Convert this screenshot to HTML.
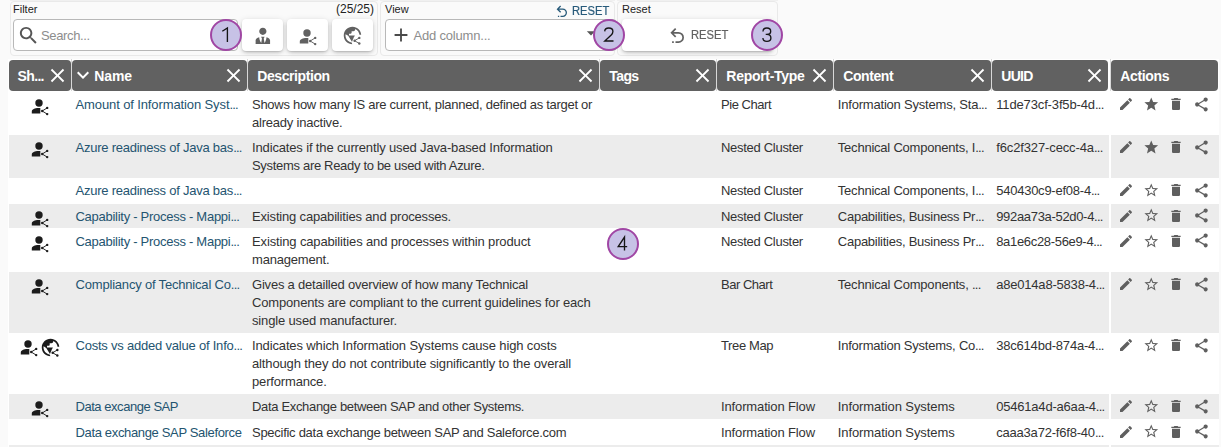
<!DOCTYPE html>
<html><head><meta charset="utf-8"><style>
*{box-sizing:border-box}
html,body{margin:0;padding:0;width:1221px;height:447px;overflow:hidden;background:#fafafa;font-family:"Liberation Sans", sans-serif;}
.a{position:absolute}
.t{position:absolute;white-space:nowrap;line-height:18px}
.el{letter-spacing:-0.75px}
.panel{position:absolute;top:1px;height:54.5px;border:1px solid #e9e9e9;border-radius:4px;background:#fafafa}
.ptop{position:absolute;top:0;height:1px;background:#f0f0f0}
.lbl{position:absolute;font-size:11px;color:#222;line-height:13px;top:3px}
.input{position:absolute;top:19px;height:31.5px;border:1px solid #b8b8b8;border-radius:4px;background:#fff}
.btn{position:absolute;top:19px;height:31.6px;border-radius:4px;background:#fff;box-shadow:0 2px 4px -1px rgba(0,0,0,.2),0 1px 6px 0 rgba(0,0,0,.12),0 1px 1px 0 rgba(0,0,0,.08)}
.badge{position:absolute;width:32px;height:32px;border-radius:50%;background:#c7c2e6;border:2px solid #a046a4;font-size:20px;line-height:28px;text-align:center;color:#111;z-index:5}
.hd{position:absolute;top:60px;height:30.5px;background:#616161;border-radius:4px}
.ht{position:absolute;line-height:30px;font-size:14px;font-weight:bold;color:#fff;white-space:nowrap}
.sep{position:absolute;top:58.5px;height:33px;width:1px;background:#d8d8d8}
.row{position:absolute;left:9px;width:1210px}
.g{background:#ececec}
.w{background:#fff}
.cell{font-size:13px;color:#333;letter-spacing:-0.2px}
.lnk{font-size:13px;color:#245470;letter-spacing:-0.15px}
</style></head><body>

<div class="ptop" style="left:10px;width:368px"></div>
<div class="ptop" style="left:380px;width:235px"></div>
<div class="ptop" style="left:617px;width:161px"></div>
<div class="panel" style="left:10px;width:368px"></div>
<div class="panel" style="left:380px;width:235px"></div>
<div class="panel" style="left:617px;width:161px"></div>
<div class="lbl" style="left:13px">Filter</div>
<div class="a" style="left:336px;top:2px;font-size:12px;line-height:15px;color:#222">(25/25)</div>
<div class="input" style="left:13px;width:225px"></div>
<svg style="position:absolute;left:17px;top:23.5px;width:23px;height:23px" viewBox="0 0 24 24"><path fill="#555" d="M15.5 14h-.79l-.28-.27C15.41 12.59 16 11.11 16 9.5 16 5.91 13.09 3 9.5 3S3 5.91 3 9.5 5.91 16 9.5 16c1.61 0 3.09-.59 4.23-1.57l.27.28v.79l5 4.99L20.49 19l-4.99-5zm-6 0C7.01 14 5 11.99 5 9.5S7.01 5 9.5 5 14 7.01 14 9.5 11.99 14 9.5 14z"/></svg>
<div class="a" style="left:41px;top:27.5px;font-size:13px;line-height:16px;color:#8d8d8d;letter-spacing:-0.35px">Search...</div>
<div class="btn" style="left:242px;width:41px"></div>
<svg style="position:absolute;left:251.6px;top:25.2px;width:21.7px;height:21.7px" viewBox="0 0 24 24"><path fill="#616161" d="M12 3C14.21 3 16 4.79 16 7S14.21 11 12 11 8 9.21 8 7 9.79 3 12 3M16 13.54C16 14.6 15.72 17.07 13.81 19.83L13 15L13.94 13.12C13.32 13.05 12.67 13 12 13S10.68 13.05 10.06 13.12L11 15L10.19 19.83C8.28 17.07 8 14.6 8 13.54C5.61 14.24 4 15.5 4 17V21H20V17C20 15.5 18.4 14.24 16 13.54Z"/></svg>
<div class="btn" style="left:287px;width:41px"></div>
<svg style="position:absolute;left:298.6px;top:27.799999999999997px;width:19px;height:18px;overflow:visible" viewBox="0 0 19 18"><circle cx="8" cy="5" r="3.7" fill="#616161"/><path fill="#616161" d="M0.80 15.60 L0.80 13.40 C0.80 11.40 3.80 10.10 7.50 10.10 L9.30 10.10 L9.30 15.60 Z"/><path stroke="#616161" stroke-width="0.95" fill="none" d="M16.20 9.90 L11.20 13.00 L16.20 16.10"/><circle cx="16.2" cy="9.9" r="1.2" fill="#616161"/><circle cx="11.2" cy="13.0" r="1.2" fill="#616161"/><circle cx="16.2" cy="16.1" r="1.2" fill="#616161"/></svg>
<div class="btn" style="left:332px;width:41px"></div>
<svg style="position:absolute;left:341.90px;top:25.00px;width:21.00px;height:21.00px;overflow:visible" viewBox="0 0 24 24"><defs><mask id="gm1" maskUnits="userSpaceOnUse" x="-2" y="-2" width="28" height="28"><rect x="-2" y="-2" width="28" height="28" fill="#fff"/><path d="M12.2 25 L11.2 19.6 L13.9 13.0 L17.6 11.0 L25 11.0 L25 25 Z" fill="#000"/></mask></defs><path fill="#616161" mask="url(#gm1)" d="M12 2C6.48 2 2 6.48 2 12s4.48 10 10 10 10-4.48 10-10S17.52 2 12 2zM11.3 19.95C7.4 19.5 4 16.1 4 12C4 11.5 4.04 11.05 4.1 10.6L7.1 12.4L11.5 19.5zM17.9 17.39c-.26-.81-1-1.39-1.9-1.39h-1v-3c0-.55-.45-1-1-1H8v-2h2c.55 0 1-.45 1-1V7h2c1.1 0 2-.9 2-2v-.41c2.93 1.19 5 4.06 5 7.41 0 2.08-.8 3.97-2.1 5.39z"/><path stroke="#616161" stroke-width="1.09" fill="none" d="M19.77 14.74 L14.40 17.94 L19.77 21.14"/><circle cx="19.77" cy="14.74" r="1.37" fill="#616161"/><circle cx="14.40" cy="17.94" r="1.37" fill="#616161"/><circle cx="19.77" cy="21.14" r="1.37" fill="#616161"/></svg>
<div class="badge" style="left:210px;top:18.799999999999997px"><svg style="position:absolute;left:-2px;top:-2px;overflow:visible" width="32" height="32" viewBox="-16 -16 32 32"><path d="M-3.7 -3.8 L1.4 -7.1 V6.9" transform="translate(0 0)" fill="none" stroke="#151515" stroke-width="1.35"/></svg></div>
<div class="lbl" style="left:385px">View</div>
<svg style="position:absolute;left:553.8px;top:4.0px;width:15.6px;height:15.6px" viewBox="0 0 24 24"><path fill="#275a7a" d="M13.5,7A6.5,6.5 0 0,1 20,13.5A6.5,6.5 0 0,1 13.5,20H10V18H13.5C16,18 18,16 18,13.5C18,11 16,9 13.5,9H7.83L10.91,12.09L9.5,13.5L4,8L9.5,2.5L10.92,3.91L7.83,7H13.5M6,18H8V20H6V18Z"/></svg>
<div class="a" style="left:572px;top:3px;font-size:13px;line-height:16px;color:#275a7a;transform:scaleX(0.86);transform-origin:0 0;-webkit-text-stroke:0.2px #275a7a">RESET</div>
<div class="input" style="left:385px;width:232px"></div>
<svg style="position:absolute;left:389.6px;top:23.5px;width:22px;height:22px" viewBox="0 0 24 24"><path fill="#4a4a4a" d="M19 13h-6v6h-2v-6H5v-2h6V5h2v6h6v2z"/></svg>
<div class="a" style="left:413.6px;top:27.5px;font-size:13px;line-height:16px;color:#8d8d8d;letter-spacing:-0.2px">Add column...</div>
<svg style="position:absolute;left:581px;top:23px;width:20px;height:20px" viewBox="0 0 24 24"><path fill="#555" d="M7 10l5 5 5-5z"/></svg>
<div class="badge" style="left:593px;top:18.5px"><svg style="position:absolute;left:-2px;top:-2px;overflow:visible" width="32" height="32" viewBox="-16 -16 32 32"><path d="M-4.3 -3.6 C-4.2 -5.9 -2.5 -7.0 -0.2 -7.0 C2.2 -7.0 3.9 -5.6 3.9 -3.5 C3.9 -2.1 3.2 -1.0 2.2 0.1 L-4.2 6.0 L4.5 6.0" transform="translate(0 0)" fill="none" stroke="#151515" stroke-width="1.35"/></svg></div>
<div class="lbl" style="left:622px">Reset</div>
<div class="btn" style="left:622px;width:151px"></div>
<svg style="position:absolute;left:666.6px;top:25.8px;width:20.4px;height:20.4px" viewBox="0 0 24 24"><path fill="#616161" d="M13.5,7A6.5,6.5 0 0,1 20,13.5A6.5,6.5 0 0,1 13.5,20H10V18H13.5C16,18 18,16 18,13.5C18,11 16,9 13.5,9H7.83L10.91,12.09L9.5,13.5L4,8L9.5,2.5L10.92,3.91L7.83,7H13.5M6,18H8V20H6V18Z"/></svg>
<div class="a" style="left:690.5px;top:27px;font-size:13px;line-height:16px;color:#616161;transform:scaleX(0.86);transform-origin:0 0;-webkit-text-stroke:0.2px #616161">RESET</div>
<div class="badge" style="left:750.7px;top:18.5px"><svg style="position:absolute;left:-2px;top:-2px;overflow:visible" width="32" height="32" viewBox="-16 -16 32 32"><path d="M-4.0 -3.6 C-4.0 -5.7 -2.3 -7.0 -0.1 -7.0 C2.2 -7.0 3.7 -5.8 3.7 -3.8 C3.7 -1.8 2.1 -0.6 -0.1 -0.6 L-1.3 -0.6 M-0.1 -0.6 C2.4 -0.6 3.9 0.8 3.9 3.0 C3.9 5.1 2.2 6.3 -0.1 6.3 C-2.5 6.3 -4.1 5.1 -4.1 3.0" transform="translate(0 0)" fill="none" stroke="#151515" stroke-width="1.35"/></svg></div>
<div class="a" style="left:8px;top:59px;width:1211px;height:388px;background:#fff"></div>
<div class="hd" style="left:9px;width:62px"></div>
<div class="ht" style="left:17.4px;top:60.5px;letter-spacing:-0.5px">Sh<span class="el">...</span></div>
<svg style="position:absolute;left:45.6px;top:64.0px;width:23px;height:23px" viewBox="0 0 24 24"><path fill="#fff" d="M19 6.41L17.59 5 12 10.59 6.41 5 5 6.41 10.59 12 5 17.59 6.41 19 12 13.41 17.59 19 19 17.59 13.41 12z"/></svg>
<div class="hd" style="left:72px;width:175px"></div>
<svg style="position:absolute;left:70.5px;top:63.2px;width:24px;height:24px" viewBox="0 0 24 24"><path fill="#fff" d="M16.59 8.59L12 13.17 7.41 8.59 6 10l6 6 6-6z"/></svg>
<div class="ht" style="left:94.3px;top:60.5px;letter-spacing:-0.1px">Name</div>
<svg style="position:absolute;left:221.6px;top:64.0px;width:23px;height:23px" viewBox="0 0 24 24"><path fill="#fff" d="M19 6.41L17.59 5 12 10.59 6.41 5 5 6.41 10.59 12 5 17.59 6.41 19 12 13.41 17.59 19 19 17.59 13.41 12z"/></svg>
<div class="hd" style="left:248px;width:351px"></div>
<div class="ht" style="left:257.3px;top:60.5px;letter-spacing:-0.42px">Description</div>
<svg style="position:absolute;left:573.6px;top:64.0px;width:23px;height:23px" viewBox="0 0 24 24"><path fill="#fff" d="M19 6.41L17.59 5 12 10.59 6.41 5 5 6.41 10.59 12 5 17.59 6.41 19 12 13.41 17.59 19 19 17.59 13.41 12z"/></svg>
<div class="hd" style="left:600px;width:116px"></div>
<div class="ht" style="left:609.3px;top:60.5px;letter-spacing:-0.6px">Tags</div>
<svg style="position:absolute;left:690.6px;top:64.0px;width:23px;height:23px" viewBox="0 0 24 24"><path fill="#fff" d="M19 6.41L17.59 5 12 10.59 6.41 5 5 6.41 10.59 12 5 17.59 6.41 19 12 13.41 17.59 19 19 17.59 13.41 12z"/></svg>
<div class="hd" style="left:717px;width:116px"></div>
<div class="ht" style="left:726.3px;top:60.5px;letter-spacing:-0.28px">Report-Type</div>
<svg style="position:absolute;left:807.6px;top:64.0px;width:23px;height:23px" viewBox="0 0 24 24"><path fill="#fff" d="M19 6.41L17.59 5 12 10.59 6.41 5 5 6.41 10.59 12 5 17.59 6.41 19 12 13.41 17.59 19 19 17.59 13.41 12z"/></svg>
<div class="hd" style="left:834px;width:157px"></div>
<div class="ht" style="left:843.3px;top:60.5px;letter-spacing:-0.42px">Content</div>
<svg style="position:absolute;left:965.6px;top:64.0px;width:23px;height:23px" viewBox="0 0 24 24"><path fill="#fff" d="M19 6.41L17.59 5 12 10.59 6.41 5 5 6.41 10.59 12 5 17.59 6.41 19 12 13.41 17.59 19 19 17.59 13.41 12z"/></svg>
<div class="hd" style="left:992px;width:116px"></div>
<div class="ht" style="left:1001.3px;top:60.5px;letter-spacing:-0.7px">UUID</div>
<svg style="position:absolute;left:1082.6px;top:64.0px;width:23px;height:23px" viewBox="0 0 24 24"><path fill="#fff" d="M19 6.41L17.59 5 12 10.59 6.41 5 5 6.41 10.59 12 5 17.59 6.41 19 12 13.41 17.59 19 19 17.59 13.41 12z"/></svg>
<div class="hd" style="left:1111px;width:107px"></div>
<div class="ht" style="left:1120.3px;top:60.5px;letter-spacing:-0.35px">Actions</div>
<div class="sep" style="left:71px"></div>
<div class="sep" style="left:247px"></div>
<div class="sep" style="left:599px"></div>
<div class="sep" style="left:716px"></div>
<div class="sep" style="left:833px"></div>
<div class="sep" style="left:991px"></div>
<div class="sep" style="left:1110px"></div>
<div class="row w" style="top:91.00px;height:43.60px"></div>
<svg style="position:absolute;left:31.0px;top:98.0px;width:19px;height:18px;overflow:visible" viewBox="0 0 19 18"><circle cx="8" cy="5" r="3.7" fill="#1c1c1c"/><path fill="#1c1c1c" d="M0.80 15.60 L0.80 13.40 C0.80 11.40 3.80 10.10 7.50 10.10 L9.30 10.10 L9.30 15.60 Z"/><path stroke="#1c1c1c" stroke-width="0.95" fill="none" d="M16.20 9.90 L11.20 13.00 L16.20 16.10"/><circle cx="16.2" cy="9.9" r="1.2" fill="#1c1c1c"/><circle cx="11.2" cy="13.0" r="1.2" fill="#1c1c1c"/><circle cx="16.2" cy="16.1" r="1.2" fill="#1c1c1c"/></svg>
<div class="t lnk" style="left:75.5px;top:96.00px;letter-spacing:-0.112px;">Amount of Information Syst<span class="el">...</span></div>
<div class="t cell" style="left:252px;top:96.00px;letter-spacing:-0.282px;">Shows how many IS are current, planned, defined as target or</div>
<div class="t cell" style="left:252px;top:114.00px;letter-spacing:-0.213px;">already inactive.</div>
<div class="t cell" style="left:721px;top:96.00px;letter-spacing:-0.450px;">Pie Chart</div>
<div class="t cell" style="left:837.8px;top:96.00px;letter-spacing:-0.200px;">Information Systems, Sta<span class="el">...</span></div>
<div class="t cell" style="left:996.2px;top:96.00px;letter-spacing:-0.138px;">11de73cf-3f5b-4d<span class="el">...</span></div>
<svg style="position:absolute;left:1117.7px;top:96.0px;width:16px;height:16px" viewBox="0 0 24 24"><path fill="#5f5f5f" d="M3 17.25V21h3.75L17.81 9.94l-3.75-3.75L3 17.25zM20.71 7.04c.39-.39.39-1.02 0-1.41l-2.34-2.34c-.39-.39-1.02-.39-1.41 0l-1.83 1.83 3.75 3.75 1.83-1.83z"/></svg>
<svg style="position:absolute;left:1142.65px;top:95.75px;width:16.5px;height:16.5px" viewBox="0 0 24 24"><path fill="#5f5f5f" d="M12 17.27L18.18 21l-1.64-7.03L22 9.24l-7.19-.61L12 2 9.19 8.63 2 9.24l5.46 4.73L5.82 21z"/></svg>
<svg style="position:absolute;left:1167.9px;top:96.0px;width:16px;height:16px" viewBox="0 0 24 24"><path fill="#5f5f5f" d="M6 19c0 1.1.9 2 2 2h8c1.1 0 2-.9 2-2V7H6v12zM19 4h-3.5l-1-1h-5l-1 1H5v2h14V4z"/></svg>
<svg style="position:absolute;left:1192.9px;top:95.55px;width:16.9px;height:16.9px" viewBox="0 0 24 24"><path fill="#5f5f5f" d="M18 16.08c-.76 0-1.44.3-1.96.77L8.91 12.7c.05-.23.09-.46.09-.7s-.04-.47-.09-.7l7.05-4.11c.54.5 1.25.81 2.04.81 1.66 0 3-1.34 3-3s-1.34-3-3-3-3 1.34-3 3c0 .24.04.47.09.7L8.04 9.81C7.5 9.31 6.79 9 6 9c-1.66 0-3 1.34-3 3s1.34 3 3 3c.79 0 1.5-.31 2.04-.81l7.12 4.16c-.05.21-.08.43-.08.65 0 1.61 1.31 2.92 2.92 2.92 1.61 0 2.92-1.31 2.92-2.92s-1.31-2.92-2.92-2.92z"/></svg>
<div class="row g" style="top:134.60px;height:43.00px"></div>
<svg style="position:absolute;left:31.0px;top:141.20000000000002px;width:19px;height:18px;overflow:visible" viewBox="0 0 19 18"><circle cx="8" cy="5" r="3.7" fill="#1c1c1c"/><path fill="#1c1c1c" d="M0.80 15.60 L0.80 13.40 C0.80 11.40 3.80 10.10 7.50 10.10 L9.30 10.10 L9.30 15.60 Z"/><path stroke="#1c1c1c" stroke-width="0.95" fill="none" d="M16.20 9.90 L11.20 13.00 L16.20 16.10"/><circle cx="16.2" cy="9.9" r="1.2" fill="#1c1c1c"/><circle cx="11.2" cy="13.0" r="1.2" fill="#1c1c1c"/><circle cx="16.2" cy="16.1" r="1.2" fill="#1c1c1c"/></svg>
<div class="t lnk" style="left:75.5px;top:139.20px;letter-spacing:-0.238px;">Azure readiness of Java bas<span class="el">...</span></div>
<div class="t cell" style="left:252px;top:139.20px;letter-spacing:-0.146px;">Indicates if the currently used Java-based Information</div>
<div class="t cell" style="left:252px;top:157.20px;letter-spacing:-0.312px;">Systems are Ready to be used with Azure.</div>
<div class="t cell" style="left:721px;top:139.20px;letter-spacing:-0.292px;">Nested Cluster</div>
<div class="t cell" style="left:837.8px;top:139.20px;letter-spacing:-0.217px;">Technical Components, I<span class="el">...</span></div>
<div class="t cell" style="left:996.2px;top:139.20px;letter-spacing:-0.125px;">f6c2f327-cecc-4a<span class="el">...</span></div>
<svg style="position:absolute;left:1117.7px;top:139.20000000000002px;width:16px;height:16px" viewBox="0 0 24 24"><path fill="#5f5f5f" d="M3 17.25V21h3.75L17.81 9.94l-3.75-3.75L3 17.25zM20.71 7.04c.39-.39.39-1.02 0-1.41l-2.34-2.34c-.39-.39-1.02-.39-1.41 0l-1.83 1.83 3.75 3.75 1.83-1.83z"/></svg>
<svg style="position:absolute;left:1142.65px;top:138.95000000000002px;width:16.5px;height:16.5px" viewBox="0 0 24 24"><path fill="#5f5f5f" d="M12 17.27L18.18 21l-1.64-7.03L22 9.24l-7.19-.61L12 2 9.19 8.63 2 9.24l5.46 4.73L5.82 21z"/></svg>
<svg style="position:absolute;left:1167.9px;top:139.20000000000002px;width:16px;height:16px" viewBox="0 0 24 24"><path fill="#5f5f5f" d="M6 19c0 1.1.9 2 2 2h8c1.1 0 2-.9 2-2V7H6v12zM19 4h-3.5l-1-1h-5l-1 1H5v2h14V4z"/></svg>
<svg style="position:absolute;left:1192.9px;top:138.75000000000003px;width:16.9px;height:16.9px" viewBox="0 0 24 24"><path fill="#5f5f5f" d="M18 16.08c-.76 0-1.44.3-1.96.77L8.91 12.7c.05-.23.09-.46.09-.7s-.04-.47-.09-.7l7.05-4.11c.54.5 1.25.81 2.04.81 1.66 0 3-1.34 3-3s-1.34-3-3-3-3 1.34-3 3c0 .24.04.47.09.7L8.04 9.81C7.5 9.31 6.79 9 6 9c-1.66 0-3 1.34-3 3s1.34 3 3 3c.79 0 1.5-.31 2.04-.81l7.12 4.16c-.05.21-.08.43-.08.65 0 1.61 1.31 2.92 2.92 2.92 1.61 0 2.92-1.31 2.92-2.92s-1.31-2.92-2.92-2.92z"/></svg>
<div class="row w" style="top:177.60px;height:26.00px"></div>
<div class="t lnk" style="left:75.5px;top:182.40px;letter-spacing:-0.238px;">Azure readiness of Java bas<span class="el">...</span></div>
<div class="t cell" style="left:721px;top:182.40px;letter-spacing:-0.292px;">Nested Cluster</div>
<div class="t cell" style="left:837.8px;top:182.40px;letter-spacing:-0.217px;">Technical Components, I<span class="el">...</span></div>
<div class="t cell" style="left:996.2px;top:182.40px;letter-spacing:-0.241px;">540430c9-ef08-4<span class="el">...</span></div>
<svg style="position:absolute;left:1117.7px;top:182.4px;width:16px;height:16px" viewBox="0 0 24 24"><path fill="#5f5f5f" d="M3 17.25V21h3.75L17.81 9.94l-3.75-3.75L3 17.25zM20.71 7.04c.39-.39.39-1.02 0-1.41l-2.34-2.34c-.39-.39-1.02-.39-1.41 0l-1.83 1.83 3.75 3.75 1.83-1.83z"/></svg>
<svg style="position:absolute;left:1142.65px;top:182.15px;width:16.5px;height:16.5px" viewBox="0 0 24 24"><path fill="#5f5f5f" d="M22 9.24l-7.19-.62L12 2 9.19 8.63 2 9.24l5.46 4.73L5.82 21 12 17.27 18.18 21l-1.63-7.03L22 9.24zM12 15.4l-3.76 2.27 1-4.28-3.32-2.88 4.38-.38L12 6.1l1.71 4.04 4.38.38-3.32 2.88 1 4.28L12 15.4z"/></svg>
<svg style="position:absolute;left:1167.9px;top:182.4px;width:16px;height:16px" viewBox="0 0 24 24"><path fill="#5f5f5f" d="M6 19c0 1.1.9 2 2 2h8c1.1 0 2-.9 2-2V7H6v12zM19 4h-3.5l-1-1h-5l-1 1H5v2h14V4z"/></svg>
<svg style="position:absolute;left:1192.9px;top:181.95000000000002px;width:16.9px;height:16.9px" viewBox="0 0 24 24"><path fill="#5f5f5f" d="M18 16.08c-.76 0-1.44.3-1.96.77L8.91 12.7c.05-.23.09-.46.09-.7s-.04-.47-.09-.7l7.05-4.11c.54.5 1.25.81 2.04.81 1.66 0 3-1.34 3-3s-1.34-3-3-3-3 1.34-3 3c0 .24.04.47.09.7L8.04 9.81C7.5 9.31 6.79 9 6 9c-1.66 0-3 1.34-3 3s1.34 3 3 3c.79 0 1.5-.31 2.04-.81l7.12 4.16c-.05.21-.08.43-.08.65 0 1.61 1.31 2.92 2.92 2.92 1.61 0 2.92-1.31 2.92-2.92s-1.31-2.92-2.92-2.92z"/></svg>
<div class="row g" style="top:203.60px;height:24.40px"></div>
<svg style="position:absolute;left:31.0px;top:209.6px;width:19px;height:18px;overflow:visible" viewBox="0 0 19 18"><circle cx="8" cy="5" r="3.7" fill="#1c1c1c"/><path fill="#1c1c1c" d="M0.80 15.60 L0.80 13.40 C0.80 11.40 3.80 10.10 7.50 10.10 L9.30 10.10 L9.30 15.60 Z"/><path stroke="#1c1c1c" stroke-width="0.95" fill="none" d="M16.20 9.90 L11.20 13.00 L16.20 16.10"/><circle cx="16.2" cy="9.9" r="1.2" fill="#1c1c1c"/><circle cx="11.2" cy="13.0" r="1.2" fill="#1c1c1c"/><circle cx="16.2" cy="16.1" r="1.2" fill="#1c1c1c"/></svg>
<div class="t lnk" style="left:75.5px;top:207.60px;letter-spacing:-0.273px;">Capability - Process - Mappi<span class="el">...</span></div>
<div class="t cell" style="left:252px;top:207.60px;letter-spacing:-0.171px;">Existing capabilities and processes.</div>
<div class="t cell" style="left:721px;top:207.60px;letter-spacing:-0.292px;">Nested Cluster</div>
<div class="t cell" style="left:837.8px;top:207.60px;letter-spacing:-0.256px;">Capabilities, Business Pr<span class="el">...</span></div>
<div class="t cell" style="left:996.2px;top:207.60px;letter-spacing:-0.320px;">992aa73a-52d0-4<span class="el">...</span></div>
<svg style="position:absolute;left:1117.7px;top:207.6px;width:16px;height:16px" viewBox="0 0 24 24"><path fill="#5f5f5f" d="M3 17.25V21h3.75L17.81 9.94l-3.75-3.75L3 17.25zM20.71 7.04c.39-.39.39-1.02 0-1.41l-2.34-2.34c-.39-.39-1.02-.39-1.41 0l-1.83 1.83 3.75 3.75 1.83-1.83z"/></svg>
<svg style="position:absolute;left:1142.65px;top:207.35px;width:16.5px;height:16.5px" viewBox="0 0 24 24"><path fill="#5f5f5f" d="M22 9.24l-7.19-.62L12 2 9.19 8.63 2 9.24l5.46 4.73L5.82 21 12 17.27 18.18 21l-1.63-7.03L22 9.24zM12 15.4l-3.76 2.27 1-4.28-3.32-2.88 4.38-.38L12 6.1l1.71 4.04 4.38.38-3.32 2.88 1 4.28L12 15.4z"/></svg>
<svg style="position:absolute;left:1167.9px;top:207.6px;width:16px;height:16px" viewBox="0 0 24 24"><path fill="#5f5f5f" d="M6 19c0 1.1.9 2 2 2h8c1.1 0 2-.9 2-2V7H6v12zM19 4h-3.5l-1-1h-5l-1 1H5v2h14V4z"/></svg>
<svg style="position:absolute;left:1192.9px;top:207.15px;width:16.9px;height:16.9px" viewBox="0 0 24 24"><path fill="#5f5f5f" d="M18 16.08c-.76 0-1.44.3-1.96.77L8.91 12.7c.05-.23.09-.46.09-.7s-.04-.47-.09-.7l7.05-4.11c.54.5 1.25.81 2.04.81 1.66 0 3-1.34 3-3s-1.34-3-3-3-3 1.34-3 3c0 .24.04.47.09.7L8.04 9.81C7.5 9.31 6.79 9 6 9c-1.66 0-3 1.34-3 3s1.34 3 3 3c.79 0 1.5-.31 2.04-.81l7.12 4.16c-.05.21-.08.43-.08.65 0 1.61 1.31 2.92 2.92 2.92 1.61 0 2.92-1.31 2.92-2.92s-1.31-2.92-2.92-2.92z"/></svg>
<div class="row w" style="top:228.00px;height:44.20px"></div>
<svg style="position:absolute;left:31.0px;top:234.79999999999998px;width:19px;height:18px;overflow:visible" viewBox="0 0 19 18"><circle cx="8" cy="5" r="3.7" fill="#1c1c1c"/><path fill="#1c1c1c" d="M0.80 15.60 L0.80 13.40 C0.80 11.40 3.80 10.10 7.50 10.10 L9.30 10.10 L9.30 15.60 Z"/><path stroke="#1c1c1c" stroke-width="0.95" fill="none" d="M16.20 9.90 L11.20 13.00 L16.20 16.10"/><circle cx="16.2" cy="9.9" r="1.2" fill="#1c1c1c"/><circle cx="11.2" cy="13.0" r="1.2" fill="#1c1c1c"/><circle cx="16.2" cy="16.1" r="1.2" fill="#1c1c1c"/></svg>
<div class="t lnk" style="left:75.5px;top:232.80px;letter-spacing:-0.273px;">Capability - Process - Mappi<span class="el">...</span></div>
<div class="t cell" style="left:252px;top:232.80px;letter-spacing:-0.139px;">Existing capabilities and processes within product</div>
<div class="t cell" style="left:252px;top:250.80px;letter-spacing:-0.200px;">management.</div>
<div class="t cell" style="left:721px;top:232.80px;letter-spacing:-0.292px;">Nested Cluster</div>
<div class="t cell" style="left:837.8px;top:232.80px;letter-spacing:-0.256px;">Capabilities, Business Pr<span class="el">...</span></div>
<div class="t cell" style="left:996.2px;top:232.80px;letter-spacing:-0.321px;">8a1e6c28-56e9-4<span class="el">...</span></div>
<svg style="position:absolute;left:1117.7px;top:232.79999999999998px;width:16px;height:16px" viewBox="0 0 24 24"><path fill="#5f5f5f" d="M3 17.25V21h3.75L17.81 9.94l-3.75-3.75L3 17.25zM20.71 7.04c.39-.39.39-1.02 0-1.41l-2.34-2.34c-.39-.39-1.02-.39-1.41 0l-1.83 1.83 3.75 3.75 1.83-1.83z"/></svg>
<svg style="position:absolute;left:1142.65px;top:232.54999999999998px;width:16.5px;height:16.5px" viewBox="0 0 24 24"><path fill="#5f5f5f" d="M22 9.24l-7.19-.62L12 2 9.19 8.63 2 9.24l5.46 4.73L5.82 21 12 17.27 18.18 21l-1.63-7.03L22 9.24zM12 15.4l-3.76 2.27 1-4.28-3.32-2.88 4.38-.38L12 6.1l1.71 4.04 4.38.38-3.32 2.88 1 4.28L12 15.4z"/></svg>
<svg style="position:absolute;left:1167.9px;top:232.79999999999998px;width:16px;height:16px" viewBox="0 0 24 24"><path fill="#5f5f5f" d="M6 19c0 1.1.9 2 2 2h8c1.1 0 2-.9 2-2V7H6v12zM19 4h-3.5l-1-1h-5l-1 1H5v2h14V4z"/></svg>
<svg style="position:absolute;left:1192.9px;top:232.35px;width:16.9px;height:16.9px" viewBox="0 0 24 24"><path fill="#5f5f5f" d="M18 16.08c-.76 0-1.44.3-1.96.77L8.91 12.7c.05-.23.09-.46.09-.7s-.04-.47-.09-.7l7.05-4.11c.54.5 1.25.81 2.04.81 1.66 0 3-1.34 3-3s-1.34-3-3-3-3 1.34-3 3c0 .24.04.47.09.7L8.04 9.81C7.5 9.31 6.79 9 6 9c-1.66 0-3 1.34-3 3s1.34 3 3 3c.79 0 1.5-.31 2.04-.81l7.12 4.16c-.05.21-.08.43-.08.65 0 1.61 1.31 2.92 2.92 2.92 1.61 0 2.92-1.31 2.92-2.92s-1.31-2.92-2.92-2.92z"/></svg>
<div class="row g" style="top:272.20px;height:60.80px"></div>
<svg style="position:absolute;left:31.0px;top:277.99999999999994px;width:19px;height:18px;overflow:visible" viewBox="0 0 19 18"><circle cx="8" cy="5" r="3.7" fill="#1c1c1c"/><path fill="#1c1c1c" d="M0.80 15.60 L0.80 13.40 C0.80 11.40 3.80 10.10 7.50 10.10 L9.30 10.10 L9.30 15.60 Z"/><path stroke="#1c1c1c" stroke-width="0.95" fill="none" d="M16.20 9.90 L11.20 13.00 L16.20 16.10"/><circle cx="16.2" cy="9.9" r="1.2" fill="#1c1c1c"/><circle cx="11.2" cy="13.0" r="1.2" fill="#1c1c1c"/><circle cx="16.2" cy="16.1" r="1.2" fill="#1c1c1c"/></svg>
<div class="t lnk" style="left:75.5px;top:276.00px;letter-spacing:-0.188px;">Compliancy of Technical Co<span class="el">...</span></div>
<div class="t cell" style="left:252px;top:276.00px;letter-spacing:-0.208px;">Gives a detailled overview of how many Technical</div>
<div class="t cell" style="left:252px;top:294.00px;letter-spacing:-0.166px;">Components are compliant to the current guidelines for each</div>
<div class="t cell" style="left:252px;top:312.00px;letter-spacing:-0.158px;">single used manufacturer.</div>
<div class="t cell" style="left:721px;top:276.00px;letter-spacing:-0.475px;">Bar Chart</div>
<div class="t cell" style="left:837.8px;top:276.00px;letter-spacing:-0.208px;">Technical Components, <span class="el">...</span></div>
<div class="t cell" style="left:996.2px;top:276.00px;letter-spacing:-0.200px;">a8e014a8-5838-4<span class="el">...</span></div>
<svg style="position:absolute;left:1117.7px;top:275.99999999999994px;width:16px;height:16px" viewBox="0 0 24 24"><path fill="#5f5f5f" d="M3 17.25V21h3.75L17.81 9.94l-3.75-3.75L3 17.25zM20.71 7.04c.39-.39.39-1.02 0-1.41l-2.34-2.34c-.39-.39-1.02-.39-1.41 0l-1.83 1.83 3.75 3.75 1.83-1.83z"/></svg>
<svg style="position:absolute;left:1142.65px;top:275.74999999999994px;width:16.5px;height:16.5px" viewBox="0 0 24 24"><path fill="#5f5f5f" d="M22 9.24l-7.19-.62L12 2 9.19 8.63 2 9.24l5.46 4.73L5.82 21 12 17.27 18.18 21l-1.63-7.03L22 9.24zM12 15.4l-3.76 2.27 1-4.28-3.32-2.88 4.38-.38L12 6.1l1.71 4.04 4.38.38-3.32 2.88 1 4.28L12 15.4z"/></svg>
<svg style="position:absolute;left:1167.9px;top:275.99999999999994px;width:16px;height:16px" viewBox="0 0 24 24"><path fill="#5f5f5f" d="M6 19c0 1.1.9 2 2 2h8c1.1 0 2-.9 2-2V7H6v12zM19 4h-3.5l-1-1h-5l-1 1H5v2h14V4z"/></svg>
<svg style="position:absolute;left:1192.9px;top:275.54999999999995px;width:16.9px;height:16.9px" viewBox="0 0 24 24"><path fill="#5f5f5f" d="M18 16.08c-.76 0-1.44.3-1.96.77L8.91 12.7c.05-.23.09-.46.09-.7s-.04-.47-.09-.7l7.05-4.11c.54.5 1.25.81 2.04.81 1.66 0 3-1.34 3-3s-1.34-3-3-3-3 1.34-3 3c0 .24.04.47.09.7L8.04 9.81C7.5 9.31 6.79 9 6 9c-1.66 0-3 1.34-3 3s1.34 3 3 3c.79 0 1.5-.31 2.04-.81l7.12 4.16c-.05.21-.08.43-.08.65 0 1.61 1.31 2.92 2.92 2.92 1.61 0 2.92-1.31 2.92-2.92s-1.31-2.92-2.92-2.92z"/></svg>
<div class="row w" style="top:333.00px;height:61.40px"></div>
<svg style="position:absolute;left:20.1px;top:339.19999999999993px;width:19px;height:18px;overflow:visible" viewBox="0 0 19 18"><circle cx="8" cy="5" r="3.7" fill="#1c1c1c"/><path fill="#1c1c1c" d="M0.80 15.60 L0.80 13.40 C0.80 11.40 3.80 10.10 7.50 10.10 L9.30 10.10 L9.30 15.60 Z"/><path stroke="#1c1c1c" stroke-width="0.95" fill="none" d="M16.20 9.90 L11.20 13.00 L16.20 16.10"/><circle cx="16.2" cy="9.9" r="1.2" fill="#1c1c1c"/><circle cx="11.2" cy="13.0" r="1.2" fill="#1c1c1c"/><circle cx="16.2" cy="16.1" r="1.2" fill="#1c1c1c"/></svg>
<svg style="position:absolute;left:40.34px;top:337.14px;width:21.12px;height:21.12px;overflow:visible" viewBox="0 0 24 24"><defs><mask id="gm2" maskUnits="userSpaceOnUse" x="-2" y="-2" width="28" height="28"><rect x="-2" y="-2" width="28" height="28" fill="#fff"/><path d="M12.2 25 L11.2 19.6 L13.9 13.0 L17.6 11.0 L25 11.0 L25 25 Z" fill="#000"/></mask></defs><path fill="#1c1c1c" mask="url(#gm2)" d="M12 2C6.48 2 2 6.48 2 12s4.48 10 10 10 10-4.48 10-10S17.52 2 12 2zM11.3 19.95C7.4 19.5 4 16.1 4 12C4 11.5 4.04 11.05 4.1 10.6L7.1 12.4L11.5 19.5zM17.9 17.39c-.26-.81-1-1.39-1.9-1.39h-1v-3c0-.55-.45-1-1-1H8v-2h2c.55 0 1-.45 1-1V7h2c1.1 0 2-.9 2-2v-.41c2.93 1.19 5 4.06 5 7.41 0 2.08-.8 3.97-2.1 5.39z"/><path stroke="#1c1c1c" stroke-width="1.08" fill="none" d="M19.73 14.73 L14.39 17.91 L19.73 21.09"/><circle cx="19.73" cy="14.73" r="1.36" fill="#1c1c1c"/><circle cx="14.39" cy="17.91" r="1.36" fill="#1c1c1c"/><circle cx="19.73" cy="21.09" r="1.36" fill="#1c1c1c"/></svg>
<div class="t lnk" style="left:75.5px;top:337.20px;letter-spacing:-0.214px;">Costs vs added value of Info<span class="el">...</span></div>
<div class="t cell" style="left:252px;top:337.20px;letter-spacing:-0.133px;">Indicates which Information Systems cause high costs</div>
<div class="t cell" style="left:252px;top:355.20px;letter-spacing:-0.138px;">although they do not contribute significantly to the overall</div>
<div class="t cell" style="left:252px;top:373.20px;letter-spacing:-0.164px;">performance.</div>
<div class="t cell" style="left:721px;top:337.20px;letter-spacing:-0.370px;">Tree Map</div>
<div class="t cell" style="left:837.8px;top:337.20px;letter-spacing:-0.219px;">Information Systems, Co<span class="el">...</span></div>
<div class="t cell" style="left:996.2px;top:337.20px;letter-spacing:-0.200px;">38c614bd-874a-4<span class="el">...</span></div>
<svg style="position:absolute;left:1117.7px;top:337.19999999999993px;width:16px;height:16px" viewBox="0 0 24 24"><path fill="#5f5f5f" d="M3 17.25V21h3.75L17.81 9.94l-3.75-3.75L3 17.25zM20.71 7.04c.39-.39.39-1.02 0-1.41l-2.34-2.34c-.39-.39-1.02-.39-1.41 0l-1.83 1.83 3.75 3.75 1.83-1.83z"/></svg>
<svg style="position:absolute;left:1142.65px;top:336.94999999999993px;width:16.5px;height:16.5px" viewBox="0 0 24 24"><path fill="#5f5f5f" d="M22 9.24l-7.19-.62L12 2 9.19 8.63 2 9.24l5.46 4.73L5.82 21 12 17.27 18.18 21l-1.63-7.03L22 9.24zM12 15.4l-3.76 2.27 1-4.28-3.32-2.88 4.38-.38L12 6.1l1.71 4.04 4.38.38-3.32 2.88 1 4.28L12 15.4z"/></svg>
<svg style="position:absolute;left:1167.9px;top:337.19999999999993px;width:16px;height:16px" viewBox="0 0 24 24"><path fill="#5f5f5f" d="M6 19c0 1.1.9 2 2 2h8c1.1 0 2-.9 2-2V7H6v12zM19 4h-3.5l-1-1h-5l-1 1H5v2h14V4z"/></svg>
<svg style="position:absolute;left:1192.9px;top:336.74999999999994px;width:16.9px;height:16.9px" viewBox="0 0 24 24"><path fill="#5f5f5f" d="M18 16.08c-.76 0-1.44.3-1.96.77L8.91 12.7c.05-.23.09-.46.09-.7s-.04-.47-.09-.7l7.05-4.11c.54.5 1.25.81 2.04.81 1.66 0 3-1.34 3-3s-1.34-3-3-3-3 1.34-3 3c0 .24.04.47.09.7L8.04 9.81C7.5 9.31 6.79 9 6 9c-1.66 0-3 1.34-3 3s1.34 3 3 3c.79 0 1.5-.31 2.04-.81l7.12 4.16c-.05.21-.08.43-.08.65 0 1.61 1.31 2.92 2.92 2.92 1.61 0 2.92-1.31 2.92-2.92s-1.31-2.92-2.92-2.92z"/></svg>
<div class="row g" style="top:394.40px;height:24.30px"></div>
<svg style="position:absolute;left:31.0px;top:400.3999999999999px;width:19px;height:18px;overflow:visible" viewBox="0 0 19 18"><circle cx="8" cy="5" r="3.7" fill="#1c1c1c"/><path fill="#1c1c1c" d="M0.80 15.60 L0.80 13.40 C0.80 11.40 3.80 10.10 7.50 10.10 L9.30 10.10 L9.30 15.60 Z"/><path stroke="#1c1c1c" stroke-width="0.95" fill="none" d="M16.20 9.90 L11.20 13.00 L16.20 16.10"/><circle cx="16.2" cy="9.9" r="1.2" fill="#1c1c1c"/><circle cx="11.2" cy="13.0" r="1.2" fill="#1c1c1c"/><circle cx="16.2" cy="16.1" r="1.2" fill="#1c1c1c"/></svg>
<div class="t lnk" style="left:75.5px;top:398.40px;letter-spacing:-0.456px;">Data excange SAP</div>
<div class="t cell" style="left:252px;top:398.40px;letter-spacing:-0.330px;">Data Exchange between SAP and other Systems.</div>
<div class="t cell" style="left:721px;top:398.40px;letter-spacing:-0.133px;">Information Flow</div>
<div class="t cell" style="left:837.8px;top:398.40px;letter-spacing:-0.089px;">Information Systems</div>
<div class="t cell" style="left:996.2px;top:398.40px;letter-spacing:-0.200px;">05461a4d-a6aa-4<span class="el">...</span></div>
<svg style="position:absolute;left:1117.7px;top:398.3999999999999px;width:16px;height:16px" viewBox="0 0 24 24"><path fill="#5f5f5f" d="M3 17.25V21h3.75L17.81 9.94l-3.75-3.75L3 17.25zM20.71 7.04c.39-.39.39-1.02 0-1.41l-2.34-2.34c-.39-.39-1.02-.39-1.41 0l-1.83 1.83 3.75 3.75 1.83-1.83z"/></svg>
<svg style="position:absolute;left:1142.65px;top:398.1499999999999px;width:16.5px;height:16.5px" viewBox="0 0 24 24"><path fill="#5f5f5f" d="M22 9.24l-7.19-.62L12 2 9.19 8.63 2 9.24l5.46 4.73L5.82 21 12 17.27 18.18 21l-1.63-7.03L22 9.24zM12 15.4l-3.76 2.27 1-4.28-3.32-2.88 4.38-.38L12 6.1l1.71 4.04 4.38.38-3.32 2.88 1 4.28L12 15.4z"/></svg>
<svg style="position:absolute;left:1167.9px;top:398.3999999999999px;width:16px;height:16px" viewBox="0 0 24 24"><path fill="#5f5f5f" d="M6 19c0 1.1.9 2 2 2h8c1.1 0 2-.9 2-2V7H6v12zM19 4h-3.5l-1-1h-5l-1 1H5v2h14V4z"/></svg>
<svg style="position:absolute;left:1192.9px;top:397.94999999999993px;width:16.9px;height:16.9px" viewBox="0 0 24 24"><path fill="#5f5f5f" d="M18 16.08c-.76 0-1.44.3-1.96.77L8.91 12.7c.05-.23.09-.46.09-.7s-.04-.47-.09-.7l7.05-4.11c.54.5 1.25.81 2.04.81 1.66 0 3-1.34 3-3s-1.34-3-3-3-3 1.34-3 3c0 .24.04.47.09.7L8.04 9.81C7.5 9.31 6.79 9 6 9c-1.66 0-3 1.34-3 3s1.34 3 3 3c.79 0 1.5-.31 2.04-.81l7.12 4.16c-.05.21-.08.43-.08.65 0 1.61 1.31 2.92 2.92 2.92 1.61 0 2.92-1.31 2.92-2.92s-1.31-2.92-2.92-2.92z"/></svg>
<div class="row w" style="top:418.70px;height:25.90px"></div>
<div class="t lnk" style="left:75.5px;top:423.60px;letter-spacing:-0.343px;">Data exchange SAP Saleforce</div>
<div class="t cell" style="left:252px;top:423.60px;letter-spacing:-0.275px;">Specific data exchange between SAP and Saleforce.com</div>
<div class="t cell" style="left:721px;top:423.60px;letter-spacing:-0.133px;">Information Flow</div>
<div class="t cell" style="left:837.8px;top:423.60px;letter-spacing:-0.089px;">Information Systems</div>
<div class="t cell" style="left:996.2px;top:423.60px;letter-spacing:-0.200px;">caaa3a72-f6f8-40<span class="el">...</span></div>
<svg style="position:absolute;left:1117.7px;top:423.5999999999999px;width:16px;height:16px" viewBox="0 0 24 24"><path fill="#5f5f5f" d="M3 17.25V21h3.75L17.81 9.94l-3.75-3.75L3 17.25zM20.71 7.04c.39-.39.39-1.02 0-1.41l-2.34-2.34c-.39-.39-1.02-.39-1.41 0l-1.83 1.83 3.75 3.75 1.83-1.83z"/></svg>
<svg style="position:absolute;left:1142.65px;top:423.3499999999999px;width:16.5px;height:16.5px" viewBox="0 0 24 24"><path fill="#5f5f5f" d="M22 9.24l-7.19-.62L12 2 9.19 8.63 2 9.24l5.46 4.73L5.82 21 12 17.27 18.18 21l-1.63-7.03L22 9.24zM12 15.4l-3.76 2.27 1-4.28-3.32-2.88 4.38-.38L12 6.1l1.71 4.04 4.38.38-3.32 2.88 1 4.28L12 15.4z"/></svg>
<svg style="position:absolute;left:1167.9px;top:423.5999999999999px;width:16px;height:16px" viewBox="0 0 24 24"><path fill="#5f5f5f" d="M6 19c0 1.1.9 2 2 2h8c1.1 0 2-.9 2-2V7H6v12zM19 4h-3.5l-1-1h-5l-1 1H5v2h14V4z"/></svg>
<svg style="position:absolute;left:1192.9px;top:423.1499999999999px;width:16.9px;height:16.9px" viewBox="0 0 24 24"><path fill="#5f5f5f" d="M18 16.08c-.76 0-1.44.3-1.96.77L8.91 12.7c.05-.23.09-.46.09-.7s-.04-.47-.09-.7l7.05-4.11c.54.5 1.25.81 2.04.81 1.66 0 3-1.34 3-3s-1.34-3-3-3-3 1.34-3 3c0 .24.04.47.09.7L8.04 9.81C7.5 9.31 6.79 9 6 9c-1.66 0-3 1.34-3 3s1.34 3 3 3c.79 0 1.5-.31 2.04-.81l7.12 4.16c-.05.21-.08.43-.08.65 0 1.61 1.31 2.92 2.92 2.92 1.61 0 2.92-1.31 2.92-2.92s-1.31-2.92-2.92-2.92z"/></svg>
<div class="row g" style="top:444.60px;height:25.40px"></div>
<div class="a" style="left:1109px;top:91px;width:2px;height:356px;background:#fff"></div>
<div class="badge" style="left:607px;top:228px"><svg style="position:absolute;left:-2px;top:-2px;overflow:visible" width="32" height="32" viewBox="-16 -16 32 32"><path d="M1.5 6.2 V-7.1 L-4.8 2.4 H4.2" transform="translate(0 0.2)" fill="none" stroke="#151515" stroke-width="1.35"/></svg></div>
</body></html>
